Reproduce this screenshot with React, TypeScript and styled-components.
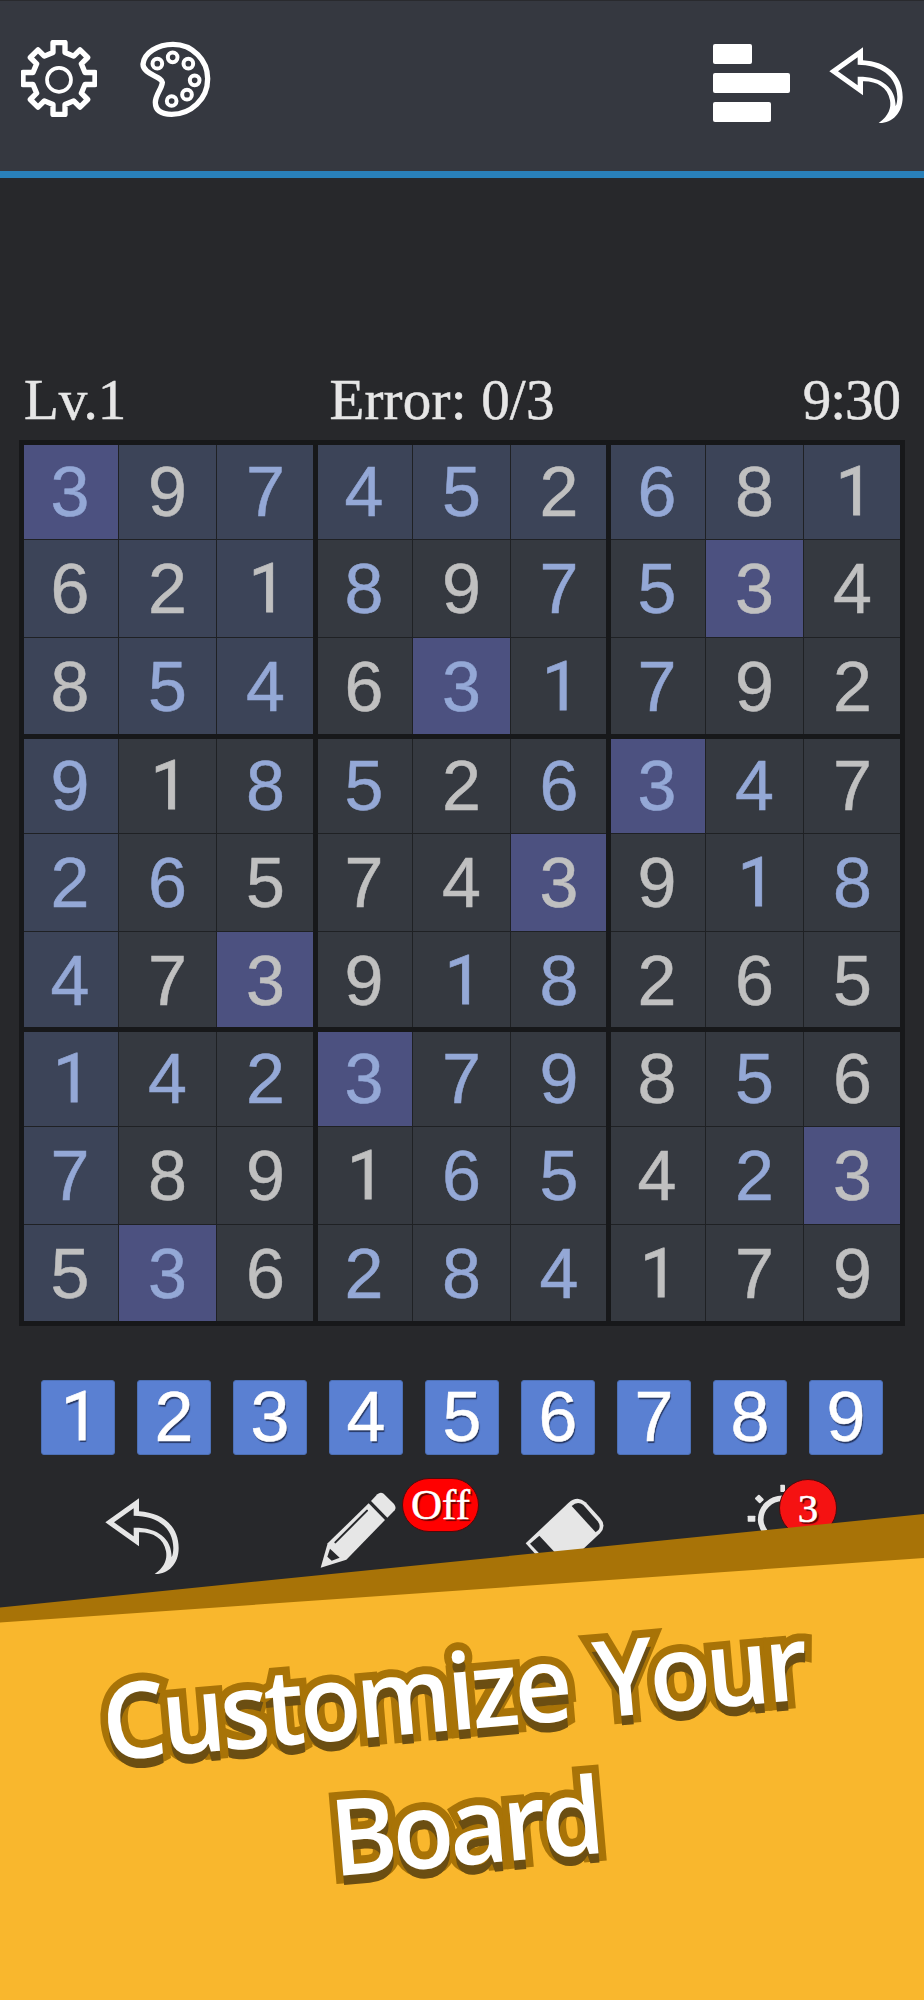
import React from "react";
import styled, { createGlobalStyle } from "styled-components";

const GlobalStyle = createGlobalStyle`
  * { box-sizing: border-box; }
  body { margin: 0; background: #27282b; }
`;

const Screen = styled.main`
  position: relative;
  display: flex;
  flex-direction: column;
  width: 924px;
  height: 2000px;
  overflow: hidden;
  background: #27282b;
`;

const Header = styled.header`
  display: flex;
  justify-content: space-between;
  align-items: flex-start;
  height: 178px;
  padding: 39px 21px 0 21px;
  background: #353840;
  border-top: 1px solid #292a2e;
  border-bottom: 7px solid #2980b9;
`;

const IconGroup = styled.div<{ $gap: number }>`
  display: flex;
  align-items: flex-start;
  gap: ${(p) => p.$gap}px;
`;

const Icon = styled.svg<{ $w: number; $h: number; $top?: number }>`
  display: block;
  flex: none;
  width: ${(p) => p.$w}px;
  height: ${(p) => p.$h}px;
  margin-top: ${(p) => p.$top ?? 0}px;
`;

const Bars = styled.div`
  display: flex;
  flex-direction: column;
  gap: 9px;
  width: 77px;
  margin-top: 4px;
`;

const Bar = styled.div<{ $w: number }>`
  width: ${(p) => p.$w}px;
  height: 20px;
  border-radius: 2px;
  background: #fff;
`;

const Status = styled.div`
  display: grid;
  grid-template-columns: 1fr auto 1fr;
  align-items: end;
  height: 66px;
  margin-top: 189px;
  margin-bottom: 7px;
  padding: 0 24px 0 24px;
  font: 57px/66px "Liberation Serif", serif;
  color: #e6e6e6;
  -webkit-text-stroke: 0.5px #e6e6e6;
`;

const StatusText = styled.span<{ $align: string; $spacing?: number; $shift?: number }>`
  text-align: ${(p) => p.$align};
  letter-spacing: ${(p) => p.$spacing ?? 0}px;
  margin-left: ${(p) => -(p.$shift ?? 0)}px;
  margin-right: ${(p) => p.$shift ?? 0}px;
`;

const Board = styled.section`
  display: grid;
  grid-template-columns: 289px 288px 289px;
  grid-template-rows: 289px 288px 289px;
  gap: 5px;
  width: 886px;
  height: 886px;
  margin-left: 19px;
  padding: 5px;
  background: #17181a;
`;

const Box = styled.div`
  display: grid;
  grid-template-columns: 94px 97px 1fr;
  grid-template-rows: 94px 97px 1fr;
  gap: 1px;
  background: #1f2124;
`;

type Tone = "plain" | "peer" | "match";
const tones: Record<Tone, string> = { plain: "#353940", peer: "#3c4458", match: "#4c5180" };

const Cell = styled.div<{ $tone: Tone; $given: boolean; $dx: number; $dy: number }>`
  display: flex;
  justify-content: center;
  align-items: center;
  padding-left: ${(p) => (p.$dx > 0 ? p.$dx : 0)}px;
  padding-right: ${(p) => (p.$dx < 0 ? -p.$dx : 0)}px;
  padding-top: ${(p) => (p.$dy > 0 ? p.$dy : 0)}px;
  padding-bottom: ${(p) => (p.$dy < 0 ? -p.$dy : 0)}px;
  background: ${(p) => tones[p.$tone]};
  color: ${(p) => (p.$given ? "#c0c0c0" : "#94a8d6")};
  font: 70px/80px "Liberation Sans", sans-serif;
  -webkit-text-stroke: 0.5px currentColor;
`;

// The numeral one is set without a foot.
const One = styled.span`
  font: 68px/80px Roboto, sans-serif;
  -webkit-text-stroke-width: 0.8px;
  padding-left: 4px;
`;

const Digit = ({ n }: { n: string }) => (n === "1" ? <One>1</One> : <span>{n}</span>);

const Keypad = styled.div`
  display: flex;
  gap: 22px;
  margin: 54px 0 0 41px;
`;

const Key = styled.button`
  display: flex;
  justify-content: center;
  align-items: center;
  width: 74px;
  height: 75px;
  padding: 0 0 2px;
  border: 1px solid #4d70b5;
  border-radius: 3px;
  background: #5a80d2;
  color: #fff;
  font: 70px/72px "Liberation Sans", sans-serif;
  -webkit-text-stroke: 0.5px #fff;
  text-shadow: 1px 2px 1px rgba(20, 30, 60, 0.75);
`;

const Tools = styled.div`
  display: flex;
  align-items: flex-start;
  padding: 29px 0 0 105px;
`;

const Tool = styled.div<{ $left?: number; $top?: number }>`
  position: relative;
  margin-left: ${(p) => p.$left ?? 0}px;
  margin-top: ${(p) => p.$top ?? 0}px;
`;

const Badge = styled.span<{ $x: number; $y: number; $w: number; $h: number; $size: number; $bg: string }>`
  position: absolute;
  left: ${(p) => p.$x}px;
  top: ${(p) => p.$y}px;
  display: flex;
  justify-content: center;
  align-items: center;
  width: ${(p) => p.$w}px;
  height: ${(p) => p.$h}px;
  border: 1.5px solid #4d0a0c;
  border-radius: 30px;
  background: ${(p) => p.$bg};
  color: #fff;
  font: ${(p) => p.$size}px/50px "Liberation Serif", serif;
  -webkit-text-stroke: 0.5px #fff;
  text-shadow: 2px 2px 1px rgba(70, 0, 0, 0.85);
`;

const Banner = styled.div`
  position: absolute;
  left: 0;
  right: 0;
  bottom: 0;
  height: 486px;
  background: #a87307;
  clip-path: polygon(0 93.5px, 100% 0, 100% 100%, 0 100%);
`;

const BannerFace = styled.div`
  display: flex;
  justify-content: center;
  height: 100%;
  padding-top: 108px;
  padding-right: 7px;
  background: #f9b72d;
  clip-path: polygon(0 108.5px, 100% 44px, 100% 100%, 0 100%);
`;

const Title = styled.h1`
  display: flex;
  flex-direction: column;
  align-items: center;
  height: 270px;
  margin: 0;
  font: 600 106px/135px "Open Sans", "Noto Sans", sans-serif;
  letter-spacing: -4.9px;
  word-spacing: 6px;
  color: #fff;
  white-space: nowrap;
  -webkit-text-stroke: 16px #a87307;
  paint-order: stroke fill;
  text-shadow: 0 9.5px 0 #6b4e12;
  transform: rotate(-5deg);
`;

const TitleLine = styled.span<{ $squeeze: number }>`
  display: block;
  transform: scaleX(${(p) => p.$squeeze});
`;

const UndoIcon = ({ color, top }: { color: string; top?: number }) => (
  <Icon $w={74} $h={77} $top={top} viewBox="508 140 222 231" fill={color} fillRule="evenodd">
    <path d="M509 213 L610 141 V180 C678 184 729 222 729 290 C729 340 695 370 657 368 C688 347 695 322 691 300 C684 260 650 242 610 243 V285 Z M535 213 L594 171 V193 C660 193 712 225 713 290 C713 300 711 312 708 318 C708 260 665 228 594 229 V255 Z" />
  </Icon>
);

const gearPoints = [
  [-18, -78], [-18, -108], [18, -108], [18, -78], [44, -67], [63, -86], [86, -63], [67, -44],
];
const gearPath = [0, 1, 2, 3]
  .flatMap((q) =>
    gearPoints.map(([x, y]) => {
      let px = x;
      let py = y;
      for (let i = 0; i < q; i++) [px, py] = [-py, px];
      return `${px},${py}`;
    })
  )
  .join(" ");

const GearIcon = () => (
  <Icon $w={76} $h={77} viewBox="-114 -115.5 228 231" fill="none" stroke="#fff">
    <polygon points={gearPath} strokeWidth="16" strokeLinejoin="round" />
    <circle cx="0" cy="4" r="36" strokeWidth="11" />
  </Icon>
);

const PaletteIcon = () => (
  <Icon $w={71} $h={76} $top={1} viewBox="419 122 213 228" fill="none" stroke="#fff">
    <path
      d="M518 132 C577 132 622 180 622 235 C622 298 570 342 514 342 C480 342 465 328 465 306 C466 282 485 265 486 246 C484 228 428 222 428 192 C431 158 472 132 518 132 Z"
      strokeWidth="16"
    />
    {[[471, 190], [517, 171], [564, 190], [583, 240], [560, 283], [514, 302]].map(([x, y]) => (
      <circle key={x} cx={x} cy={y} r="14.5" strokeWidth="12" />
    ))}
  </Icon>
);

const PencilIcon = () => (
  <Icon $w={76} $h={77} viewBox="961 94 228 231" fill="#e6e6e6">
    <path d="M1107 128 L1156 178 L1040 297 L963 321 L984 248 Z" />
    <path d="M1114 121 L1133 101 Q1142 92 1152 99 L1183 130 Q1191 140 1185 149 L1163 171 Z" />
    <path d="M1007 245 L1102 150" stroke="#27282b" strokeWidth="6" strokeLinecap="round" />
    <path d="M991 264 L1020 291 L996 300 L983 288 Z" fill="#27282b" />
  </Icon>
);

const EraserIcon = () => (
  <Icon $w={80} $h={78} viewBox="190 112 240 234" fill="#e6e6e6">
    <path d="M192 248 L320 127 Q347 103 372 125 L415 172 Q436 195 415 218 L290 335 Q280 342 270 335 Z" />
    <path d="M330 136 Q348 119 365 133 L408 182 Q418 196 411 207 L402 215 Z" fill="#27282b" />
    <path d="M205 249 L233 225 L310 308 L280 328 Z" fill="#27282b" />
  </Icon>
);

const BulbIcon = () => (
  <Icon $w={76} $h={78} viewBox="855 71 228 234" fill="#e6e6e6">
    <rect x="955" y="73" width="14" height="22" rx="2" />
    <rect x="857" y="166" width="23" height="18" rx="2" />
    <rect x="881" y="107" width="22" height="18" rx="3" transform="rotate(45 892 116)" />
    <path d="M962 114 C925 114 896 143 896 178 C896 202 910 213 920 232 L1004 232 C1014 213 1028 202 1028 178 C1028 143 999 114 962 114 Z" fill="none" stroke="#e6e6e6" strokeWidth="17" />
  </Icon>
);

const solution = [
  "397452681", "621897534", "854631792",
  "918526347", "265743918", "473918265",
  "142379856", "789165423", "536284179",
];
// "#" marks a digit given by the puzzle, "." one entered by the player.
const givens = [
  ".#...#.##", "###.#..##", "#..#...##",
  ".#..#...#", "..#####..", ".###..###",
  "......#.#", ".###..#.#", "#.#...###",
];

const toneOf = (r: number, c: number): Tone => {
  if (solution[r][c] === "3") return "match";
  return r === 0 || c === 0 || (r < 3 && c < 3) ? "peer" : "plain";
};

const nine = [0, 1, 2, 3, 4, 5, 6, 7, 8];
const nudgeX = [-2, 0, 1];
const nudgeY = [-1, 1, 2];

export default function App() {
  return (
    <>
      <GlobalStyle />
      <Screen>
        <Header>
          <IconGroup $gap={43}>
            <GearIcon />
            <PaletteIcon />
          </IconGroup>
          <IconGroup $gap={39}>
            <Bars>
              <Bar $w={39} />
              <Bar $w={77} />
              <Bar $w={58} />
            </Bars>
            <UndoIcon color="#fff" top={6.5} />
          </IconGroup>
        </Header>

        <Status>
          <StatusText $align="left">Lv.1</StatusText>
          <StatusText $align="center" $spacing={0.2} $shift={20}>Error: 0/3</StatusText>
          <StatusText $align="right" $spacing={-1}>9:30</StatusText>
        </Status>

        <Board>
          {nine.map((b) => (
            <Box key={b}>
              {nine.map((i) => {
                const r = Math.floor(b / 3) * 3 + Math.floor(i / 3);
                const c = (b % 3) * 3 + (i % 3);
                return (
                  <Cell
                    key={i}
                    $tone={toneOf(r, c)}
                    $given={givens[r][c] === "#"}
                    $dx={nudgeX[c % 3]}
                    $dy={nudgeY[r % 3]}
                  >
                    <Digit n={solution[r][c]} />
                  </Cell>
                );
              })}
            </Box>
          ))}
        </Board>

        <Keypad>
          {nine.map((n) => (
            <Key key={n}>
              <Digit n={String(n + 1)} />
            </Key>
          ))}
        </Keypad>

        <Tools>
          <Tool $top={14}>
            <UndoIcon color="#e6e6e6" />
          </Tool>
          <Tool $left={141} $top={8}>
            <PencilIcon />
            <Badge $x={82} $y={-14} $w={77} $h={54} $size={43} $bg="#ff0000">Off</Badge>
          </Tool>
          <Tool $left={129} $top={14}>
            <EraserIcon />
          </Tool>
          <Tool $left={142} $top={0}>
            <BulbIcon />
            <Badge $x={32} $y={-5} $w={58} $h={58} $size={41} $bg="#f51212">3</Badge>
          </Tool>
        </Tools>

        <Banner>
          <BannerFace>
            <Title>
              <TitleLine $squeeze={0.95}>Customize Your</TitleLine>
              <TitleLine $squeeze={0.95}>Board</TitleLine>
            </Title>
          </BannerFace>
        </Banner>
      </Screen>
    </>
  );
}
